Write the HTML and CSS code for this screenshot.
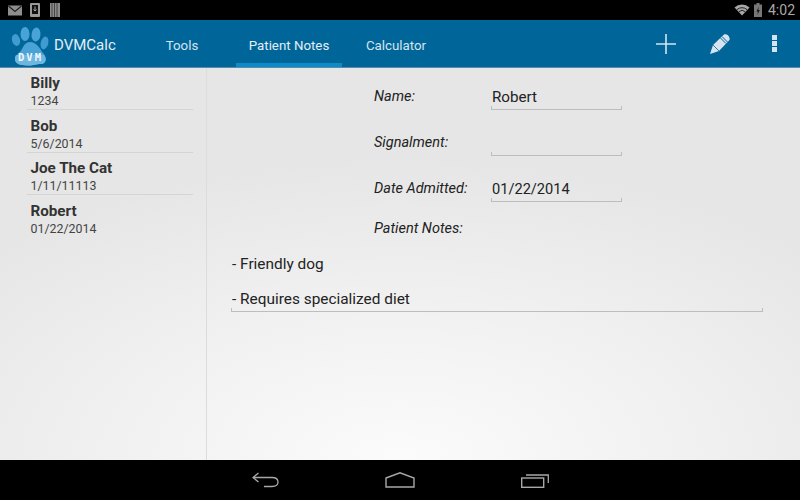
FILE: index.html
```html
<!DOCTYPE html>
<html lang="en">
<head>
    <meta charset="UTF-8">
    <title>DVMCalc</title>
    <link rel="stylesheet" href="styles.css">
</head>
<body>
    <div class="screen">
        <div class="status-bar">
            <div class="status-left">
                <svg width="14" height="11" viewBox="0 0 14 11"><rect x="0" y="0.5" width="14" height="10" fill="#8e8e8e"/><path d="M0.5 1 L7 6.5 L13.5 1" fill="none" stroke="#222" stroke-width="1.2"/></svg>
                <svg width="10" height="14" viewBox="0 0 10 14"><rect x="0" y="0" width="10" height="14" rx="1" fill="#9a9a9a"/><rect x="2" y="2" width="6" height="9" fill="#111"/><path d="M5 3.5 V8 M3.5 6.5 L5 8 L6.5 6.5" stroke="#aaa" fill="none"/></svg>
                <svg class="barcode" width="10" height="14" viewBox="0 0 10 14"><rect width="10" height="14" fill="#8a8a8a"/><path d="M2 0 V14 M4.5 0 V14 M7 0 V14" stroke="#333" stroke-width="0.8"/></svg>
            </div>
            <div class="status-right">
                <svg width="16" height="12" viewBox="0 0 16 12"><path d="M0.5 3.5 A11 11 0 0 1 15.5 3.5 L8 11.5 Z" fill="#a8a8a8"/><path d="M3 5.6 A7.5 7.5 0 0 1 13 5.6 M5 7.6 A4.5 4.5 0 0 1 11 7.6" stroke="#222" fill="none"/></svg>
                <svg width="8" height="14" viewBox="0 0 8 14"><rect x="2.5" y="0" width="3" height="2" fill="#777"/><rect x="0" y="1.5" width="8" height="12.5" fill="#777"/><path d="M4.8 3.5 L2.5 8.5 H4 L3.2 12 L5.8 7 H4.2 Z" fill="#111"/></svg>
                <span class="clock">4:02</span>
            </div>
        </div>

        <div class="action-bar">
            <div class="brand">
                <svg class="logo" width="40" height="40" viewBox="0 0 40 40">
                    <ellipse cx="5" cy="13" rx="4" ry="6" fill="#3f9bd0" transform="rotate(-14 5 13)"/>
                    <ellipse cx="14" cy="7" rx="4.5" ry="7" fill="#4aa3d6"/>
                    <ellipse cx="25" cy="7.5" rx="4.5" ry="7" fill="#4aa3d6" transform="rotate(6 25 7.5)"/>
                    <ellipse cx="33.5" cy="16" rx="3.8" ry="6.5" fill="#3f9bd0" transform="rotate(14 33.5 16)"/>
                    <path d="M19 15 C26 15 29 22 32 26 C36 30 36 37 30 37 C25 37 23 38.500 18 38.500 C12 38.500 5 38 4 33 C3.500 28 9 26 11 22 C13 18 15 15 19 15 Z" fill="#4aa3d6"/>
                    <path d="M5 28 H33 C36 31 35 37 30 37 C25 37 23 38.500 18 38.500 C12 38.500 5 38 4 33 C3.800 31 4 29.500 5 28 Z" fill="#6db6e0"/>
                    <text x="19.5" y="34" class="logo-text">DVM</text>
                </svg>
                <span class="app-name">DVMCalc</span>
            </div>
            <div class="tabs">
                <div class="tab tab-tools">Tools</div>
                <div class="tab tab-notes active">Patient Notes</div>
                <div class="tab tab-calc">Calculator</div>
            </div>
            <div class="actions">
                <svg width="20" height="20" viewBox="0 0 20 20"><path d="M10 0 V20 M0 10 H20" stroke="#d5e4ee" stroke-width="1.6"/></svg>
                <svg width="22" height="22" viewBox="0 0 22 22"><path d="M1 21 L4 12 L15 1.5 C17 0.5 20 2 20.5 5 C21 6 20.5 7 20 7.5 L10 18 Z" fill="#d5e4ee"/><path d="M13 3.5 L18.5 9 M11.5 5 L17 10.5" stroke="#006699" stroke-width="1"/><path d="M4 12 L10 18" stroke="#006699" stroke-width="0.8"/></svg>
                <div class="overflow"><i></i><i></i><i></i></div>
            </div>
        </div>

        <div class="content">
            <div class="sidebar">
                <div class="patient">
                    <div class="patient-name">Billy</div>
                    <div class="patient-date">1234</div>
                </div>
                <div class="patient">
                    <div class="patient-name">Bob</div>
                    <div class="patient-date">5/6/2014</div>
                </div>
                <div class="patient">
                    <div class="patient-name">Joe The Cat</div>
                    <div class="patient-date">1/11/11113</div>
                </div>
                <div class="patient last">
                    <div class="patient-name">Robert</div>
                    <div class="patient-date">01/22/2014</div>
                </div>
            </div>
            <div class="detail">
                <div class="form-row">
                    <div class="label">Name:</div>
                    <div class="field">Robert</div>
                </div>
                <div class="form-row">
                    <div class="label">Signalment:</div>
                    <div class="field"></div>
                </div>
                <div class="form-row">
                    <div class="label">Date Admitted:</div>
                    <div class="field field-date">01/22/2014</div>
                </div>
                <div class="form-row notes-label">
                    <div class="label">Patient Notes:</div>
                </div>
                <div class="notes">
                    <p>- Friendly dog</p>
                    <p>- Requires specialized diet</p>
                </div>
            </div>
        </div>

        <div class="nav-bar">
            <svg width="27" height="16" viewBox="0 0 27 16"><path d="M6.500 1 L1 5.500 L6.500 10 M1.500 5.500 H20 C24 5.500 26 7.500 26 10 C26 12.500 24 14.500 20 14.500 H12" fill="none" stroke="#a8a8a8" stroke-width="1.3"/></svg>
            <svg width="30" height="16" viewBox="0 0 30 16"><path d="M1 6 L15 0.8 L29 6 V15 H1 Z" fill="none" stroke="#a8a8a8" stroke-width="1.4"/></svg>
            <svg width="28" height="15" viewBox="0 0 28 15"><rect x="0.7" y="5" width="22" height="9.3" fill="none" stroke="#a8a8a8" stroke-width="1.4"/><path d="M5 2 H27.3 V10" fill="none" stroke="#a8a8a8" stroke-width="1.3"/></svg>
        </div>
    </div>
</body>
</html>
```
FILE: styles.css
```css
html, body {
    margin: 0;
    padding: 0;
    overflow: hidden;
}
body {
    font-family: Roboto, "Liberation Sans", sans-serif;
}
.screen {
    width: 800px;
    height: 500px;
    display: flex;
    flex-direction: column;
}
.status-bar {
    height: 20px;
    background-color: #000;
    display: flex;
    justify-content: space-between;
    align-items: center;
    padding: 0 5px 0 8px;
}
.status-left {
    display: flex;
    align-items: center;
    gap: 8px;
}
.status-left .barcode {
    margin-left: 2px;
}
.status-right {
    display: flex;
    align-items: center;
    gap: 4px;
}
.clock {
    color: #a8a8a8;
    font-size: 14px;
    margin-left: 2px;
}
.action-bar {
    height: 47px;
    background-color: #006699;
    display: flex;
    align-items: stretch;
    border-bottom: 1px solid #5c8ca8;
}
.brand {
    width: 148px;
    display: flex;
    align-items: center;
    padding-left: 11px;
    box-sizing: border-box;
}
.logo {
    flex: none;
    margin-top: 6px;
}
.logo-text {
    font-family: "DejaVu Sans Mono", monospace;
    font-size: 10.5px;
    font-weight: bold;
    letter-spacing: 2px;
    fill: #f0f7fb;
    text-anchor: middle;
}
.app-name {
    color: #e4eef4;
    font-size: 15px;
    margin-left: 3px;
    padding-top: 3px;
}
.tabs {
    display: flex;
    flex: 1;
}
.tab {
    color: #d5e4ee;
    font-size: 13.3px;
    display: flex;
    align-items: center;
    justify-content: center;
    box-sizing: border-box;
    padding-top: 3px;
}
.tab-tools {
    width: 68px;
    margin-right: 20px;
}
.tab-notes {
    width: 106px;
    margin-right: 12px;
}
.tab-calc {
    width: 84px;
}
.tab.active {
    padding-top: 7px;
    border-bottom: 4px solid #0f8ac9;
    color: #e4eef4;
}
.actions {
    display: flex;
    align-items: center;
    gap: 33px;
    padding-right: 23px;
}
.overflow {
    display: flex;
    flex-direction: column;
    gap: 1px;
    margin-left: 8px;
}
.overflow i {
    display: block;
    width: 5px;
    height: 5px;
    background-color: #d5e4ee;
}
.content {
    flex: 1;
    display: flex;
    background: radial-gradient(ellipse 560px 300px at 50% 100%, #fbfbfb 0%, #f0f0f0 55%, #e6e6e6 100%);
    min-height: 0;
}
.sidebar {
    width: 207px;
    box-sizing: border-box;
    border-right: 1px solid #dcdcdc;
    padding: 6px 13px 0 27px;
}
.patient {
    box-sizing: border-box;
    border-bottom: 1px solid #d4d4d4;
    padding-left: 3.5px;
    height: 36px;
    margin-bottom: 6.5px;
}
.patient.last {
    border-bottom: none;
}
.patient-name {
    color: #333;
    font-size: 15.2px;
    font-weight: 700;
    line-height: 18px;
}
.patient-date {
    color: #444;
    font-size: 12.4px;
    line-height: 16px;
    margin-top: 1px;
}
.detail {
    flex: 1;
    padding: 16px 37px 0 24px;
    min-width: 0;
}
.form-row {
    display: flex;
    height: 46px;
    padding-left: 143px;
}
.label {
    width: 117px;
    font-style: italic;
    font-size: 14.5px;
    color: #222;
    line-height: 26px;
}
.field {
    width: 131px;
    height: 26px;
    box-sizing: border-box;
    color: #222;
    font-size: 15.2px;
    line-height: 26px;
    padding-left: 1px;
    border-bottom: 1px solid #bdbdbd;
    position: relative;
}
.field-date {
    font-size: 14.6px;
}
/* the little end ticks of the holo edit text line */
.field::before,
.field::after,
.notes::before,
.notes::after {
    content: "";
    position: absolute;
    bottom: 0;
    width: 1px;
    height: 3px;
    background-color: #bdbdbd;
}
.field::before,
.notes::before {
    left: 0;
}
.field::after,
.notes::after {
    right: 0;
}
.notes-label {
    height: 39px;
    margin-top: -6px;
}
.notes {
    border-bottom: 1px solid #bdbdbd;
    font-size: 15.4px;
    color: #222;
    padding-left: 1px;
    position: relative;
}
.notes p {
    margin: 0;
    line-height: 18px;
    padding-bottom: 17px;
}
.notes p:last-child {
    padding-bottom: 3px;
}
.nav-bar {
    height: 40px;
    background-color: #000;
    display: flex;
    align-items: center;
    justify-content: center;
    gap: 106px;
}
```
